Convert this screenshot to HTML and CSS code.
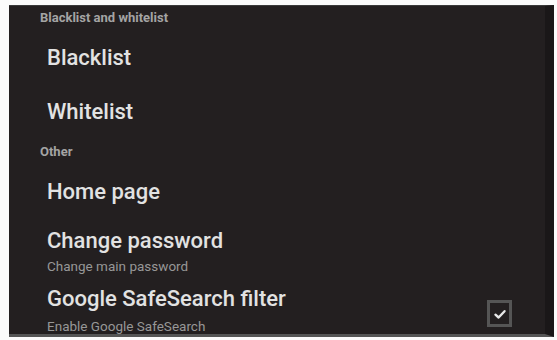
FILE: index.html
```html
<!DOCTYPE html>
<html>
<head>
<meta charset="utf-8">
<link rel="stylesheet" href="styles.css">
</head>
<body>
<div class="screen">
  <div class="header first">Blacklist and whitelist</div>
  <div class="item tall"><div class="title">Blacklist</div></div>
  <div class="item tall"><div class="title">Whitelist</div></div>
  <div class="header">Other</div>
  <div class="item tall"><div class="title">Home page</div></div>
  <div class="item two"><div class="title">Change password</div><div class="sub">Change main password</div></div>
  <div class="item two last check-row">
    <div class="text"><div class="title">Google SafeSearch filter</div><div class="sub">Enable Google SafeSearch</div></div>
    <div class="checkbox"><svg viewBox="0 0 20 20" width="14" height="14"><path d="M3.5 11 L8 15 L16.5 6" fill="none" stroke="#e8e8e8" stroke-width="3.4" stroke-linecap="round" stroke-linejoin="round"/></svg></div>
  </div>
</div>
</body>
</html>
```
FILE: styles.css
```css
html, body { margin: 0; padding: 0; background: #fbfbfb; }
body { width: 557px; height: 340px; overflow: hidden; }
.screen {
  margin: 5px 3px 0 9px;
  height: 332px;
  background: #231f20;
  border-top: 1px solid #3a3a3a;
  border-right: 9px solid #1a1718;
  border-bottom: 3px solid #555;
  font-family: Roboto, "Open Sans", sans-serif;
  color: #e2e2e2;
  box-sizing: border-box;
  padding: 4px 0 0 38px;
  display: flex;
  flex-direction: column;
  overflow: hidden;
}
.header {
  font-size: 13px;
  font-weight: bold;
  color: #a4a4a4;
  margin-left: -7px;
  height: 16px;
  line-height: 16px;
  margin-top: 5px;
  flex: none;
}
.header.first { margin-top: 0; }
.item { display: flex; flex-direction: column; justify-content: center; flex: none; }
.item.tall { height: 54px; margin-top: 5px; }
.item.tall + .item.tall { margin-top: 0; }
.item.two { justify-content: flex-start; padding-top: 8px; }
.item.last { padding-top: 10px; }
.title { font-size: 22px; line-height: 28px; font-weight: 500; }
.sub { font-size: 13.5px; color: #979797; line-height: 18px; margin-top: 2px; }
.last .sub { margin-top: 5px; line-height: 16px; }
.item.check-row { flex-direction: row; align-items: flex-start; padding-right: 33px; }
.check-row .text { flex: 1; }
.checkbox {
  margin-top: 15px;
  width: 25px; height: 27px;
  border: 3px solid #555;
  box-sizing: border-box;
  display: flex; align-items: center; justify-content: center;
}
```
